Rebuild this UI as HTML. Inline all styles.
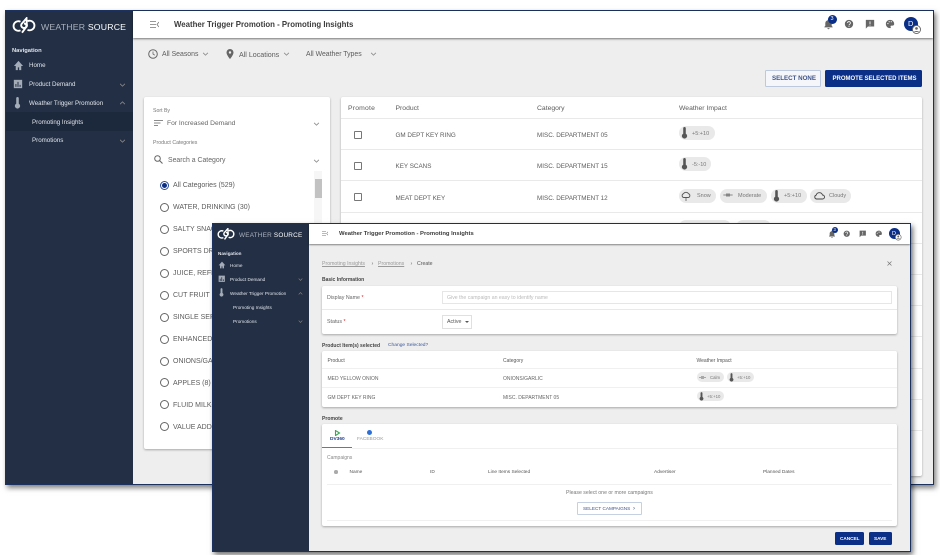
<!DOCTYPE html>
<html><head><meta charset="utf-8">
<style>
html{background:#fff}
html,body{margin:0;padding:0;width:940px;height:555px;overflow:hidden}
body{font-family:"Liberation Sans",sans-serif;position:relative;color:#555;background:#fff;filter:blur(.3px)}
div,span,svg{position:absolute}
b{font-weight:bold}
.t{position:absolute;white-space:nowrap;line-height:0;font-size:7.5px;color:#5c5c5c;margin-top:1.300px}
.t span{position:static}
.w{color:#e2e6ed}
.win{box-sizing:border-box;border:1px solid #1b3261;background:#eee;box-shadow:2px 3px 5px rgba(0,0,0,.5)}
.side{background:#222f44}
.card{background:#fff;border-radius:2px;box-shadow:0 1px 2px rgba(0,0,0,.3)}
.ln{height:1px;background:#e9e9e9}
.chip{background:#e9e9e9;border-radius:8px}
.btn{background:#0b2f86;border-radius:1.5px}
.rd{width:7px;height:7px;border:1px solid #666;border-radius:50%;background:#fff}
.cb{width:6px;height:6px;border:1.2px solid #777;border-radius:1px}
svg{overflow:visible;color:#555}
.sd{color:#a4acb8}
</style></head><body>
<svg width="0" height="0" style="position:absolute">
<defs>
<symbol id="th" viewBox="0 0 8 14"><path d="M3 1.500a1 1 0 0 1 2 0V8a2.600 2.600 0 1 1-2 0z" fill="currentColor" stroke="currentColor"/></symbol>
<symbol id="lg" viewBox="0 0 24 16"><g fill="none" stroke="#fff" stroke-width="1.900"><path d="M8.500 4.200A4.800 4.800 0 1 0 8.500 12.800"/><path d="M15.500 3.700A4.800 4.800 0 1 1 15.500 12.300"/><path d="M14.500.8L9.500 6.500c-1 2 .5 4 2.500 4s3.500-1.500 2.800-3.800z"/><path d="M10 15.200l4-5.500c1-2 .2-3.500-2-3.700"/></g></symbol>
<symbol id="home" viewBox="0 0 12 12"><path d="M6 1L1 6.500h2V11h2.300V8h1.400v3H9V6.500h2z" fill="#a4acb8"/></symbol>
<symbol id="bar" viewBox="0 0 12 12"><path d="M1 1h10v10H1z" fill="#a4acb8"/><path d="M3.500 6v3.500M6 3.500v6M8.500 7v2.500" stroke="#222f44" stroke-width="1.200"/></symbol>
<symbol id="chd" viewBox="0 0 8 5"><path d="M1 1l3 3 3-3" fill="none" stroke="#8a8a8a" stroke-width="1"/></symbol>
<symbol id="chu" viewBox="0 0 8 5"><path d="M1 4l3-3 3 3" fill="none" stroke="#8a8a8a" stroke-width="1"/></symbol>
<symbol id="bell" viewBox="0 0 12 12"><path d="M6 1a1 1 0 0 1 1 1c2 .5 2.500 2 2.500 3.500V8l1 1.200v.5h-9v-.5l1-1.200V5.500C2.500 4 3 2.500 5 2a1 1 0 0 1 1-1zM4.800 10.500h2.400a1.200 1.200 0 0 1-2.400 0z" fill="#666"/></symbol>
<symbol id="help" viewBox="0 0 12 12"><circle cx="6" cy="6" r="5" fill="#666"/><path d="M4.300 4.800a1.700 1.700 0 1 1 2.600 1.400c-.6.400-.9.700-.9 1.300M6 8.300v1.100" stroke="#fff" fill="none"/></symbol>
<symbol id="fb" viewBox="0 0 12 12"><path d="M1 1h10v8H3.500L1 11.500z" fill="#666"/><path d="M6 2.800v3.200M6 6.800v1" stroke="#fff"/></symbol>
<symbol id="pal" viewBox="0 0 12 12"><path d="M6 1a5 5 0 0 0 0 10c1 0 1.200-.8.800-1.400-.5-.8 0-1.600 1-1.600H9a2 2 0 0 0 2-2.200C11 3 8.800 1 6 1z" fill="#666"/><circle cx="3.500" cy="5.500" r=".7" fill="#fff"/><circle cx="5" cy="3.300" r=".7" fill="#fff"/><circle cx="7.500" cy="3.300" r=".7" fill="#fff"/></symbol>
<symbol id="usr" viewBox="0 0 10 10"><circle cx="5" cy="5" r="4.500" fill="#fff" stroke="#666"/><circle cx="5" cy="3.800" r="1.500" fill="#666"/><path d="M2 7.800c1-1.500 5-1.500 6 0z" fill="#666"/></symbol>
<symbol id="menu" viewBox="0 0 9 7"><path d="M0 .5h6M0 3.500h6M0 6.500h6M9 1L7 3.500 9 6" fill="none" stroke="#777" stroke-width=".8"/></symbol>
<symbol id="cal" viewBox="0 0 14 6"><path d="M0 3h14M4 1.500h6M4 4.500h6" stroke="#666" fill="none"/></symbol>
</defs></svg>

<!-- OUTER WINDOW -->
<div class="win" style="left:5px;top:10px;width:929px;height:475px"></div>
<div class="side" style="left:6px;top:11px;width:127px;height:473px"></div>
<div style="left:133px;top:11px;width:800px;height:27px;background:#fff;box-shadow:0 1px 2px rgba(0,0,0,.5)"></div>
<svg style="left:12px;top:17px" width="24" height="17"><use href="#lg"/></svg>
<div class="t" style="left:41px;top:26px;font-size:8.700px;color:#aab1bc;letter-spacing:.2px">WEATHER <span style="color:#fff">SOURCE</span></div>
<div class="t w" style="left:12px;top:49.500px;font-size:5.800px"><b>Navigation</b></div>
<svg style="left:13px;top:60px" width="11" height="11"><use href="#home"/></svg>
<div class="t w" style="left:29px;top:65px;font-size:6.200px">Home</div>
<svg style="left:13px;top:79px" width="10" height="10"><use href="#bar"/></svg>
<div class="t w" style="left:29px;top:84px;font-size:6.200px">Product Demand</div>
<svg style="left:119px;top:83px" width="7" height="4"><use href="#chd"/></svg>
<svg class="sd" style="left:14px;top:97px" width="7" height="12"><use href="#th"/></svg>
<div class="t w" style="left:29px;top:103px;font-size:6.200px">Weather Trigger Promotion</div>
<svg style="left:119px;top:101px" width="7" height="4"><use href="#chu"/></svg>
<div style="left:6px;top:112px;width:127px;height:19px;background:#1c283b"></div>
<div class="t w" style="left:32px;top:121.500px;font-size:6.200px">Promoting Insights</div>
<div class="t w" style="left:32px;top:140px;font-size:6.200px">Promotions</div>
<svg style="left:119px;top:139px" width="7" height="4"><use href="#chd"/></svg>

<svg style="left:150px;top:21px" width="9" height="7"><use href="#menu"/></svg>
<div class="t" style="left:174px;top:23.500px;font-size:7.850px;color:#3c3c3c"><b>Weather Trigger Promotion - Promoting Insights</b></div>
<svg style="left:823px;top:18px" width="11" height="12"><use href="#bell"/></svg>
<div style="left:828px;top:14.500px;width:9px;height:9px;border-radius:50%;background:#0b2f86"></div>
<div class="t" style="left:830.500px;top:18px;font-size:5.500px;color:#fff">3</div>
<svg style="left:843.500px;top:19px" width="10" height="10"><use href="#help"/></svg>
<svg style="left:864.500px;top:18.500px" width="10" height="10"><use href="#fb"/></svg>
<svg style="left:885px;top:19px" width="10" height="10"><use href="#pal"/></svg>
<div style="left:904px;top:17px;width:14px;height:14px;border-radius:50%;background:#0b2f86"></div>
<div class="t" style="left:908px;top:23px;font-size:7.500px;color:#fff">D</div>
<svg style="left:912px;top:25px" width="9" height="9"><use href="#usr"/></svg>

<svg style="left:148px;top:49px" width="10" height="10"><circle cx="5" cy="5" r="4.300" fill="none" stroke="#666"/><path d="M5 2.500V5l1.800 1.200" fill="none" stroke="#666" stroke-width=".8"/></svg>
<div class="t" style="left:162px;top:53.500px;font-size:6.900px">All Seasons</div>
<svg style="left:202px;top:52px" width="7" height="4"><use href="#chd"/></svg>
<svg style="left:226px;top:49px" width="8" height="10"><path d="M4 0a3.500 3.500 0 0 0-3.500 3.500C.5 6 4 10 4 10s3.500-4 3.500-6.500A3.500 3.500 0 0 0 4 0z" fill="#666"/><circle cx="4" cy="3.500" r="1.200" fill="#eee"/></svg>
<div class="t" style="left:239px;top:53.500px;font-size:7.100px">All Locations</div>
<svg style="left:283px;top:52px" width="7" height="4"><use href="#chd"/></svg>
<div class="t" style="left:306px;top:53.500px;font-size:6.900px">All Weather Types</div>
<svg style="left:370px;top:52px" width="7" height="4"><use href="#chd"/></svg>

<div style="box-sizing:border-box;left:765px;top:70px;width:56px;height:17px;border:1px solid #bcc8de;background:#f5f6f9;border-radius:1.500px"></div>
<div class="t" style="left:772px;top:77.500px;font-size:6.200px;color:#3f5488"><b>SELECT NONE</b></div>
<div class="btn" style="left:825px;top:70px;width:97px;height:16.500px"></div>
<div class="t" style="left:832.500px;top:77.500px;font-size:6px;color:#fff"><b>PROMOTE SELECTED ITEMS</b></div>

<!-- left card -->
<div class="card" style="left:144px;top:97px;width:186px;height:352px"></div>
<div class="t" style="left:153px;top:110px;font-size:5.200px;color:#777">Sort By</div>
<svg style="left:154px;top:120px" width="9" height="6"><path d="M0 .5h9M0 3h6.500M0 5.500h4" stroke="#666" stroke-width=".8"/></svg>
<div class="t" style="left:167px;top:123px;font-size:6.700px;color:#666">For Increased Demand</div>
<svg style="left:313px;top:122px" width="7" height="4"><use href="#chd"/></svg>
<div class="t" style="left:153px;top:142px;font-size:5.200px;color:#777">Product Categories</div>
<svg style="left:154px;top:155px" width="9" height="9"><circle cx="3.500" cy="3.500" r="2.800" fill="none" stroke="#666"/><path d="M5.500 5.500L8.500 8.500" stroke="#666" stroke-width="1.100"/></svg>
<div class="t" style="left:168px;top:160px;font-size:6.900px;color:#666">Search a Category</div>
<svg style="left:313px;top:159px" width="7" height="4"><use href="#chd"/></svg>
<div style="left:314px;top:171px;width:8px;height:270px;background:#f6f6f6"></div>
<div style="left:314.500px;top:179px;width:7px;height:19px;background:#c2c2c2"></div>
<div class="rd" style="left:160px;top:181px;border-color:#2a4a9a"></div>
<div style="left:162px;top:183px;width:5px;height:5px;border-radius:50%;background:#0b2f86"></div>
<div class="t" style="left:173px;top:185px;font-size:7px">All Categories (529)</div>
<div class="rd" style="left:160px;top:203px"></div><div class="t" style="left:173px;top:207px;font-size:7px">WATER, DRINKING (30)</div>
<div class="rd" style="left:160px;top:225px"></div><div class="t" style="left:173px;top:229px;font-size:7px">SALTY SNACKS (20)</div>
<div class="rd" style="left:160px;top:247px"></div><div class="t" style="left:173px;top:251px;font-size:7px">SPORTS DRINKS (15)</div>
<div class="rd" style="left:160px;top:269px"></div><div class="t" style="left:173px;top:273px;font-size:7px">JUICE, REFRIGERATED</div>
<div class="rd" style="left:160px;top:291px"></div><div class="t" style="left:173px;top:295px;font-size:7px">CUT FRUIT (12)</div>
<div class="rd" style="left:160px;top:313px"></div><div class="t" style="left:173px;top:317px;font-size:7px">SINGLE SERVE</div>
<div class="rd" style="left:160px;top:335px"></div><div class="t" style="left:173px;top:339px;font-size:7px">ENHANCED WATER</div>
<div class="rd" style="left:160px;top:357px"></div><div class="t" style="left:173px;top:361px;font-size:7px">ONIONS/GARLIC</div>
<div class="rd" style="left:160px;top:378px"></div><div class="t" style="left:173px;top:382.500px;font-size:7px">APPLES (8)</div>
<div class="rd" style="left:160px;top:400px"></div><div class="t" style="left:173px;top:404.500px;font-size:7px">FLUID MILK-WHITE</div>
<div class="rd" style="left:160px;top:422px"></div><div class="t" style="left:173px;top:426.500px;font-size:7px">VALUE ADDED</div>

<!-- table -->
<div class="card" style="left:341px;top:97px;width:581px;height:379px"></div>
<div class="t" style="left:348px;top:108px;font-size:6.800px;letter-spacing:.2px">Promote</div>
<div class="t" style="left:395.500px;top:108px;font-size:6.800px">Product</div>
<div class="t" style="left:537px;top:108px;font-size:6.800px">Category</div>
<div class="t" style="left:679px;top:108px;font-size:6.800px">Weather Impact</div>
<div class="ln" style="left:341px;top:118px;width:581px"></div>
<div class="ln" style="left:341px;top:149px;width:581px"></div>
<div class="ln" style="left:341px;top:180px;width:581px"></div>
<div class="ln" style="left:341px;top:212px;width:581px"></div>
<div class="ln" style="left:341px;top:243px;width:581px"></div>
<div class="ln" style="left:341px;top:274px;width:581px"></div>
<div class="ln" style="left:341px;top:305px;width:581px"></div>
<div class="ln" style="left:341px;top:336px;width:581px"></div>
<div class="ln" style="left:341px;top:368px;width:581px"></div>
<div class="ln" style="left:341px;top:399px;width:581px"></div>
<div class="ln" style="left:341px;top:430px;width:581px"></div>
<div class="cb" style="left:353.500px;top:131px"></div>
<div class="cb" style="left:353.500px;top:162px"></div>
<div class="cb" style="left:353.500px;top:193px"></div>
<div class="t" style="left:395.500px;top:135px;font-size:6.300px">GM DEPT KEY RING</div>
<div class="t" style="left:537px;top:135px;font-size:6.300px">MISC. DEPARTMENT 05</div>
<div class="t" style="left:395.500px;top:166px;font-size:6.300px">KEY SCANS</div>
<div class="t" style="left:537px;top:166px;font-size:6.300px">MISC. DEPARTMENT 15</div>
<div class="t" style="left:395.500px;top:197.500px;font-size:6.300px">MEAT DEPT KEY</div>
<div class="t" style="left:537px;top:197.500px;font-size:6.300px">MISC. DEPARTMENT 12</div>

<div class="chip" style="left:679px;top:126px;width:36px;height:14px"></div>
<svg style="left:681px;top:127px" width="7" height="12"><use href="#th"/></svg>
<div class="t" style="left:692px;top:132.500px;font-size:5.500px;color:#777">+5:+10</div>
<div class="chip" style="left:679px;top:157px;width:32px;height:14px"></div>
<svg style="left:681px;top:158px" width="7" height="12"><use href="#th"/></svg>
<div class="t" style="left:692px;top:164px;font-size:5.500px;color:#777">-5:-10</div>
<div class="chip" style="left:679px;top:188.500px;width:37px;height:14px"></div>
<svg style="left:681px;top:190.500px" width="10" height="10"><path d="M2.500 6.500a2 2 0 0 1 0-3.800 3 3 0 0 1 5 0 2 2 0 0 1 0 3.800z" fill="none" stroke="#555" stroke-width=".9"/><path d="M5 7v3" stroke="#777"/></svg>
<div class="t" style="left:697px;top:195px;font-size:5.500px;color:#777">Snow</div>
<div class="chip" style="left:719.500px;top:188.500px;width:47.500px;height:14px"></div>
<svg style="left:723px;top:193px" width="10" height="4"><use href="#cal"/></svg>
<div class="t" style="left:738px;top:195px;font-size:5.500px;color:#777">Moderate</div>
<div class="chip" style="left:771px;top:188.500px;width:35.500px;height:14px"></div>
<svg style="left:773px;top:189.500px" width="7" height="12"><use href="#th"/></svg>
<div class="t" style="left:784px;top:195px;font-size:5.500px;color:#777">+5:+10</div>
<div class="chip" style="left:810px;top:188.500px;width:41px;height:14px"></div>
<svg style="left:814px;top:191.500px" width="11" height="8"><path d="M2.500 7a2 2 0 0 1-.3-3.900A3.300 3.300 0 0 1 8.500 3 2 2 0 0 1 8.500 7z" fill="none" stroke="#444" stroke-width=".9"/></svg>
<div class="t" style="left:829px;top:195px;font-size:5.500px;color:#777">Cloudy</div>
<div class="chip" style="left:679px;top:220px;width:52px;height:14px"></div>
<div class="chip" style="left:736px;top:220px;width:35px;height:14px"></div>

<!-- INNER WINDOW -->
<div class="win" style="left:212px;top:223px;width:698.500px;height:329px;box-shadow:2px 3px 5px rgba(0,0,0,.55)"></div>
<div class="side" style="left:213px;top:224px;width:96px;height:327px"></div>
<div style="left:309px;top:224px;width:601px;height:20px;background:#fff;box-shadow:0 1px 1.500px rgba(0,0,0,.45)"></div>
<svg style="left:217px;top:228px" width="18" height="12"><use href="#lg"/></svg>
<div class="t" style="left:239px;top:234.500px;font-size:6.400px;color:#aab1bc;letter-spacing:.2px">WEATHER <span style="color:#fff">SOURCE</span></div>
<div class="t w" style="left:218px;top:253px;font-size:4.600px"><b>Navigation</b></div>
<svg style="left:218px;top:261px" width="8" height="8"><use href="#home"/></svg>
<div class="t w" style="left:230px;top:265px;font-size:4.700px">Home</div>
<svg style="left:218px;top:275px" width="7.500" height="7.500"><use href="#bar"/></svg>
<div class="t w" style="left:230px;top:279px;font-size:4.700px">Product Demand</div>
<svg style="left:298px;top:278px" width="5" height="3"><use href="#chd"/></svg>
<svg class="sd" style="left:218.500px;top:288px" width="5" height="9"><use href="#th"/></svg>
<div class="t w" style="left:230px;top:293px;font-size:4.700px">Weather Trigger Promotion</div>
<svg style="left:298px;top:292px" width="5" height="3"><use href="#chu"/></svg>
<div class="t w" style="left:233px;top:307px;font-size:4.700px">Promoting Insights</div>
<div class="t w" style="left:233px;top:321px;font-size:4.700px">Promotions</div>
<svg style="left:298px;top:320px" width="5" height="3"><use href="#chd"/></svg>

<svg style="left:322px;top:231px" width="6" height="5"><use href="#menu"/></svg>
<div class="t" style="left:339px;top:233px;font-size:5.900px;color:#3c3c3c"><b>Weather Trigger Promotion - Promoting Insights</b></div>
<svg style="left:827.500px;top:229.500px" width="8" height="8"><use href="#bell"/></svg>
<div style="left:831.500px;top:226.500px;width:6.500px;height:6.500px;border-radius:50%;background:#0b2f86"></div>
<div class="t" style="left:833.500px;top:229px;font-size:4.200px;color:#fff">3</div>
<svg style="left:843px;top:230px" width="7.500" height="7.500"><use href="#help"/></svg>
<svg style="left:858.500px;top:229.500px" width="7.500" height="7.500"><use href="#fb"/></svg>
<svg style="left:874.500px;top:230px" width="7.500" height="7.500"><use href="#pal"/></svg>
<div style="left:888.500px;top:228px;width:11px;height:11px;border-radius:50%;background:#0b2f86"></div>
<div class="t" style="left:892px;top:232.500px;font-size:5.500px;color:#fff">D</div>
<svg style="left:895px;top:234px" width="6.500" height="6.500"><use href="#usr"/></svg>

<div class="t" style="left:322px;top:262.500px;font-size:5.200px;color:#999;text-decoration:underline">Promoting Insights</div>
<div class="t" style="left:371.500px;top:262.500px;font-size:5.500px;color:#666">&#8250;</div>
<div class="t" style="left:378px;top:262.500px;font-size:5.200px;color:#999;text-decoration:underline">Promotions</div>
<div class="t" style="left:410.500px;top:262.500px;font-size:5.500px;color:#666">&#8250;</div>
<div class="t" style="left:417px;top:262.500px;font-size:5.200px;color:#555">Create</div>
<svg style="left:886.500px;top:260.500px" width="5" height="5"><path d="M.5.500l4 4M4.500.500l-4 4" stroke="#777" stroke-width=".7"/></svg>

<div class="t" style="left:322px;top:279px;font-size:5px;color:#444"><b>Basic Information</b></div>
<div class="card" style="left:322px;top:286px;width:575px;height:48px"></div>
<div class="ln" style="left:322px;top:309px;width:575px"></div>
<div class="t" style="left:327px;top:297px;font-size:5.300px;color:#666">Display Name <span style="color:#d22">*</span></div>
<div style="box-sizing:border-box;left:442px;top:291px;width:450px;height:12.500px;border:1px solid #e6e6e6;background:#fff"></div>
<div class="t" style="left:447px;top:297px;font-size:5.200px;color:#bbb">Give the campaign an easy to identify name</div>
<div class="t" style="left:327px;top:321px;font-size:5.300px;color:#666">Status <span style="color:#d22">*</span></div>
<div style="box-sizing:border-box;left:442px;top:315px;width:30px;height:13.500px;border:1px solid #e0e0e0;background:#fff"></div>
<div class="t" style="left:447px;top:321px;font-size:5.300px;color:#555">Active</div>
<svg style="left:464.500px;top:320.500px" width="4" height="2"><path d="M0 0h4L2 2z" fill="#555"/></svg>

<div class="t" style="left:322px;top:344.500px;font-size:5px;color:#444"><b>Product Item(s) selected</b></div>
<div class="t" style="left:388px;top:345px;font-size:4.900px;color:#3d5a9a">Change Selected?</div>
<div class="card" style="left:322px;top:351px;width:575px;height:56px"></div>
<div class="ln" style="left:322px;top:368px;width:575px;background:#f0f0f0"></div>
<div class="ln" style="left:322px;top:387px;width:575px;background:#f0f0f0"></div>
<div class="t" style="left:327.500px;top:359.500px;font-size:5px;color:#555">Product</div>
<div class="t" style="left:503px;top:359.500px;font-size:5px;color:#555">Category</div>
<div class="t" style="left:696.500px;top:359.500px;font-size:5px;color:#555">Weather Impact</div>
<div class="t" style="left:327.500px;top:378px;font-size:5px;color:#666">MED YELLOW ONION</div>
<div class="t" style="left:503px;top:378px;font-size:5px;color:#666">ONIONS/GARLIC</div>
<div class="t" style="left:327.500px;top:396.500px;font-size:5px;color:#666">GM DEPT KEY RING</div>
<div class="t" style="left:503px;top:396.500px;font-size:5px;color:#666">MISC. DEPARTMENT 05</div>
<div class="chip" style="left:696.500px;top:372px;width:27.500px;height:10px"></div>
<svg style="left:699px;top:376px" width="7" height="3"><use href="#cal"/></svg>
<div class="t" style="left:710px;top:376.500px;font-size:4.300px;color:#777">Calm</div>
<div class="chip" style="left:727px;top:372px;width:26.500px;height:10px"></div>
<svg style="left:728.500px;top:372.500px" width="5" height="9"><use href="#th"/></svg>
<div class="t" style="left:737px;top:376.500px;font-size:4.300px;color:#777">+5:+10</div>
<div class="chip" style="left:696.500px;top:391px;width:27px;height:10px"></div>
<svg style="left:698.500px;top:391.500px" width="5" height="9"><use href="#th"/></svg>
<div class="t" style="left:707px;top:395.500px;font-size:4.300px;color:#777">+5:+10</div>

<div class="t" style="left:322px;top:417.500px;font-size:5.100px;color:#444"><b>Promote</b></div>
<div class="card" style="left:322px;top:424px;width:575px;height:102px"></div>
<svg style="left:334.500px;top:429.500px" width="5" height="6"><path d="M.5 0v6M.5.500L4.500 3 .5 5.500" fill="none" stroke="#3aa757" stroke-width="1.100"/></svg>
<div class="t" style="left:330px;top:439px;font-size:4.800px;color:#1f3f8c"><b>DV360</b></div>
<div style="left:366.500px;top:429.500px;width:5px;height:5px;border-radius:50%;background:#2d6fd8"></div>
<div class="t" style="left:357px;top:439px;font-size:4.800px;color:#999">FACEBOOK</div>
<div style="left:322px;top:447px;width:30px;height:1.200px;background:#5a78b8"></div>
<div class="ln" style="left:352px;top:448px;width:545px;background:#f0f0f0"></div>
<div class="t" style="left:327px;top:457px;font-size:5px;color:#888">Campaigns</div>
<div style="left:334px;top:470px;width:3.500px;height:3.500px;border-radius:50%;background:#aaa"></div>
<div class="t" style="left:349.500px;top:471.500px;font-size:4.800px;color:#555">Name</div>
<div class="t" style="left:430px;top:471.500px;font-size:4.800px;color:#555">ID</div>
<div class="t" style="left:488px;top:471.500px;font-size:4.800px;color:#555">Line Items Selected</div>
<div class="t" style="left:654px;top:471.500px;font-size:4.800px;color:#555">Advertiser</div>
<div class="t" style="left:763px;top:471.500px;font-size:4.800px;color:#555">Planned Dates</div>
<div class="ln" style="left:327px;top:483.500px;width:565px;background:#f0f0f0"></div>
<div class="t" style="left:566px;top:492px;font-size:5.200px;color:#777">Please select one or more campaigns</div>
<div style="box-sizing:border-box;left:577px;top:502px;width:65px;height:13px;border:1px solid #c6d0e3;background:#fff;border-radius:1px"></div>
<div class="t" style="left:583px;top:508px;font-size:4.700px;color:#3f5488">SELECT CAMPAIGNS</div>
<div class="t" style="left:633px;top:508px;font-size:6px;color:#3f5488">&#8250;</div>
<div class="ln" style="left:327px;top:520px;width:565px;background:#f0f0f0"></div>

<div class="btn" style="left:835px;top:532px;width:29px;height:13px"></div>
<div class="t" style="left:840px;top:538px;font-size:4.700px;color:#fff"><b>CANCEL</b></div>
<div class="btn" style="left:869px;top:532px;width:23px;height:13px"></div>
<div class="t" style="left:874px;top:538px;font-size:4.700px;color:#fff"><b>SAVE</b></div>
</body></html>
